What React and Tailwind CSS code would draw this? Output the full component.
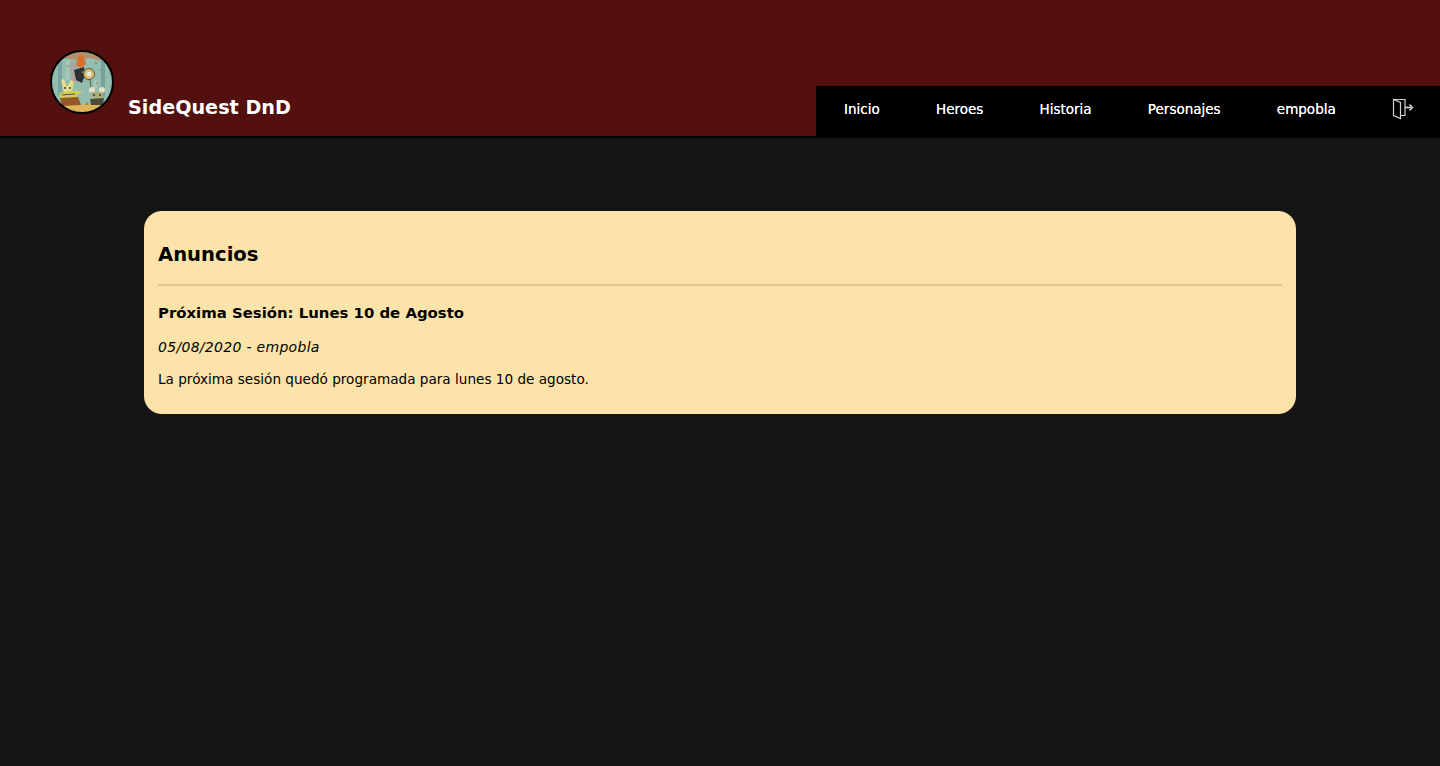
import React from "react";

const links = ["Inicio", "Heroes", "Historia", "Personajes", "empobla"];

function Logo() {
  return (
    <svg width="64" height="64" viewBox="0 0 64 64" className="shrink-0">
      <defs>
        <clipPath id="logoClip">
          <circle cx="32" cy="32" r="31" />
        </clipPath>
        <filter id="logoBlur" x="-5%" y="-5%" width="110%" height="110%">
          <feGaussianBlur stdDeviation="0.6" />
        </filter>
      </defs>
      <g clipPath="url(#logoClip)">
        <g filter="url(#logoBlur)">
          <rect width="64" height="64" fill="#93bdae" />
          <path d="M0 0 H64 V9 L52 11 L40 8 L26 10 L12 8 L0 11 Z" fill="#b08f6c" />
          <rect x="8" y="9" width="4" height="36" fill="#7aa3a3" />
          <rect x="16" y="10" width="3" height="20" fill="#a6c7ba" />
          <rect x="51" y="9" width="4" height="38" fill="#76a09e" />
          <rect x="44" y="30" width="3" height="8" fill="#a6c7ba" />
          <path d="M20 11 L28 12 L29 32 L22 34 Z" fill="#aaa59f" />
          <path d="M0 55 L64 54 L64 64 L0 64 Z" fill="#e0b45a" />
          <circle cx="46" cy="13" r="1" fill="#a8734a" />
          <circle cx="50" cy="20" r="0.8" fill="#a8734a" />
          <circle cx="18" cy="16" r="0.8" fill="#a8734a" />
          <circle cx="47" cy="33" r="0.8" fill="#a8734a" />
          {/* central hero with the orange hat and shield */}
          <path d="M26 15 L29 5 L33 5 L36 14 L31 18 Z" fill="#dc702a" />
          <path d="M24 20 L34 17 L35 25 L32 33 L26 30 Z" fill="#2c3036" />
          <path d="M31 22 L37 20 L36 25 Z" fill="#b8925a" />
          <circle cx="39" cy="24" r="5.5" fill="#d9c37a" stroke="#5c4c2b" strokeWidth="1" />
          <circle cx="39" cy="24" r="2.3" fill="#f2edd6" />
          <path d="M40 30 L41 38" stroke="#5d7340" strokeWidth="1.3" />
          {/* rabbit */}
          <path d="M11 30 L14 29 L17 37 L21 30 L24 32 L22 41 L14 42 Z" fill="#eade86" />
          <path d="M9 43 L23 41 L33 41 L27 45 L28 50 L11 50 Z" fill="#d2cb5c" />
          <path d="M10 48 L28 47 L31 55 L12 56 Z" fill="#94582a" />
          <path d="M12 45 L25 44" stroke="#4e5a2a" strokeWidth="1" />
          <circle cx="15" cy="38" r="0.9" fill="#22262a" />
          <circle cx="20" cy="38" r="0.9" fill="#22262a" />
          {/* mouse */}
          <circle cx="42" cy="40" r="3" fill="#e6dfc6" />
          <circle cx="52" cy="40" r="3" fill="#e6dfc6" />
          <path d="M41 42 L53 42 L53 48 L47 50 L42 48 Z" fill="#adad7c" />
          <path d="M40 49 L54 48 L53 55 L41 55 Z" fill="#484e3a" />
          <circle cx="44" cy="45" r="0.9" fill="#22262a" />
          <circle cx="50" cy="45" r="0.9" fill="#22262a" />
          <path d="M35 55 L37 52 L39 55 Z" fill="#c07a35" />
        </g>
      </g>
      <circle cx="32" cy="32" r="31" fill="none" stroke="#000000" strokeWidth="2" />
    </svg>
  );
}

function LogoutIcon() {
  return (
    <svg width="22" height="22" viewBox="0 0 22 22" fill="none" stroke="#d0d0d0" strokeWidth="1.2" className="shrink-0">
      <path d="M1.5 1.5 H13 V17.5 H8.5" />
      <path d="M1.5 1.5 V17.5 L8.5 20.5 V4.5 Z" />
      <path d="M13 9.5 H19" strokeWidth="1.7" />
      <path d="M17.5 6.5 L20.5 9.5 L17.5 12.5" strokeWidth="1.5" />
    </svg>
  );
}

export default function App() {
  return (
    <div className="min-h-[766px] bg-[#151515] font-['DejaVu_Sans',sans-serif] text-black">
      <header className="flex h-[138px] items-end bg-[#53100e]">
        <div className="flex h-full flex-1 items-end border-b-2 border-black pb-[22px] pl-[50px]">
          <Logo />
          <h1 className="mb-[-7px] ml-[14px] text-[19.2px] font-bold leading-[26px] text-white">SideQuest DnD</h1>
        </div>
        <nav className="flex h-[52px] w-[624px] items-center justify-between bg-black pb-[6px] pl-7 pr-[26px] text-[13.5px] text-white [text-shadow:0_0_0.5px_#ffffff]">
          {links.map((link) => (
            <a key={link} href="#" className="leading-4">
              {link}
            </a>
          ))}
          <LogoutIcon />
        </nav>
      </header>
      <main className="px-36 pt-[73px]">
        <section className="rounded-[18px] bg-[#fbe3aa] px-3.5 pb-[26px] pt-[30px]">
          <h2 className="text-[19.6px] font-bold leading-7">Anuncios</h2>
          <hr className="mt-[15px] border-0 border-t-2 border-[#e0c894]" />
          <h3 className="mt-[17px] text-[14.9px] font-bold leading-5">Próxima Sesión: Lunes 10 de Agosto</h3>
          <p className="mt-[15px] text-[14px] italic leading-[18px] tracking-[0.3px]">05/08/2020 - empobla</p>
          <p className="mt-[14px] text-[13.6px] leading-[18px]">La próxima sesión quedó programada para lunes 10 de agosto.</p>
        </section>
      </main>
    </div>
  );
}
